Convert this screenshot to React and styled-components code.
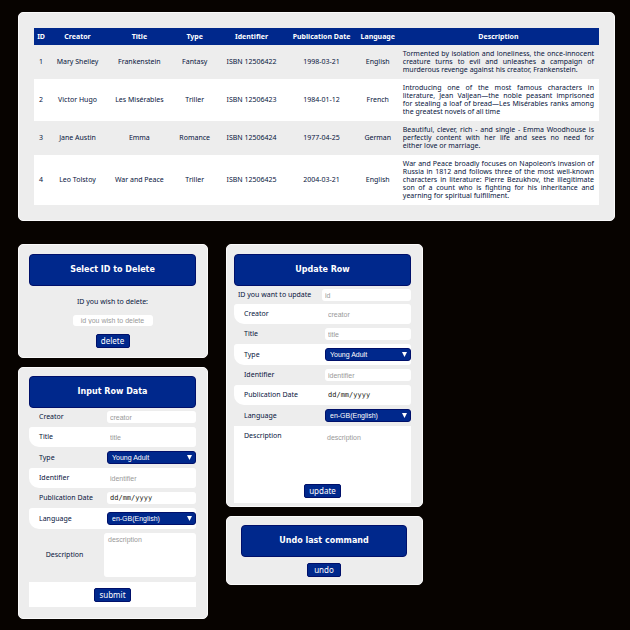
import React from "react";
import styled, { createGlobalStyle } from "styled-components";

const navy = "#00288c";
const edge = "#00106a";
const ink = "#06143c";
const textFont = '"Noto Sans", sans-serif';

const GlobalStyle = createGlobalStyle`
  * { box-sizing: border-box; }
  body { margin: 0; background: #070300; color: ${ink}; font: 7px/10px ${textFont}; }
`;

const Page = styled.main`
  padding: 12px 15px 12px 18px;
  display: flex;
  flex-direction: column;
  gap: 23px;
`;

const Panel = styled.section`
  background: #ededed;
  border: 1px solid #fafafa;
  border-radius: 5px;
  padding: ${(p) => p.$pad || "9px 11px 9px 10px"};
`;

const Table = styled.table`
  width: 100%;
  table-layout: fixed;
  border-collapse: collapse;
  line-height: 8px;
  text-align: center;
`;

const Col = styled.col`
  width: ${(p) => p.$w}%;
`;

const Th = styled.th`
  height: 17px;
  padding: 0;
  background: ${navy};
  color: #fff;
  white-space: nowrap;
`;

const Tr = styled.tr`
  &:nth-child(even) { background: #fff; }
`;

const Td = styled.td`
  padding: 5px 0;
  white-space: nowrap;
`;

const DescriptionCell = styled(Td)`
  padding: 5px;
  text-align: justify;
  white-space: normal;
`;

const Forms = styled.div`
  display: grid;
  grid-template-columns: 190fr 197fr 174fr;
  column-gap: 18px;
  align-items: start;
`;

const Column = styled.div`
  display: flex;
  flex-direction: column;
  gap: 9px;
`;

const Heading = styled.h2`
  margin: 0;
  height: 32px;
  display: flex;
  align-items: center;
  justify-content: center;
  background: ${navy};
  border: 1px solid ${edge};
  border-radius: 4px;
  color: #fff;
  font: bold 8px/10px "DejaVu Sans", sans-serif;
`;

const Form = styled.form`
  display: flex;
  flex-direction: column;
`;

const Centered = styled(Form)`
  align-items: center;
  padding-top: ${(p) => p.$top}px;
  gap: 8px;
`;

const Row = styled.div`
  display: grid;
  grid-template-columns: ${(p) => p.$cols};
  align-items: center;
  padding: 4px 0 ${(p) => (p.$flush ? "3px 4px" : "4px 10px")};
  border-radius: 3px 3px 3px 10px;
  background: ${(p) => (p.$white ? "#fff" : "transparent")};
  &:first-child { padding-top: 3px; }
`;

const Label = styled.label`
  white-space: nowrap;
`;

const Input = styled.input`
  width: ${(p) => p.$w || "100%"};
  min-width: 0;
  height: ${(p) => (p.$w ? 11 : 12)}px;
  padding: 0 3px;
  border: 0;
  border-radius: 3px;
  background: #fff;
  color: #222;
  font: 7px/10px "Liberation Sans", sans-serif;
  text-align: ${(p) => (p.$w ? "center" : "left")};
  &::placeholder { color: #999; opacity: 1; }
`;

const DateInput = styled(Input)`
  font-family: "DejaVu Sans Mono", monospace;
  &::placeholder { color: #201810; }
`;

const SelectBox = styled.div`
  position: relative;
`;

const Select = styled.select`
  appearance: none;
  display: block;
  width: 100%;
  height: 13px;
  padding: 0 4px;
  border: 1px solid ${edge};
  border-radius: 3px;
  background: ${navy};
  color: #fff;
  font: 7px/10px "Liberation Sans", sans-serif;
`;

const Arrow = styled.svg`
  position: absolute;
  right: 4px;
  top: 4px;
  width: 5px;
  height: 5px;
  pointer-events: none;
`;

const TextArea = styled.textarea`
  display: block;
  width: 100%;
  height: ${(p) => p.$h}px;
  padding: 2px 4px;
  border: 0;
  border-radius: 3px;
  resize: none;
  background: #fff;
  font: 7px/10px "Liberation Sans", sans-serif;
  &::placeholder { color: #999; opacity: 1; }
`;

const DescriptionRow = styled.div`
  display: grid;
  grid-template-columns: 75fr 92fr;
  align-items: center;
  padding: 4px 0 5px;
`;

const CenterLabel = styled(Label)`
  text-align: center;
  padding-right: 4px;
`;

const Footer = styled.div`
  display: flex;
  justify-content: center;
  padding: 6px 0 5px;
  background: #fff;
`;

const UpdateBlock = styled.div`
  display: flex;
  flex-direction: column;
  background: #fff;
`;

const UpdateDescription = styled.div`
  display: grid;
  grid-template-columns: 79fr 88fr;
  padding: 5px 0 5px 10px;
`;

const Button = styled.button`
  height: 14px;
  min-width: 34px;
  padding: 0 4px;
  border: 1px solid ${edge};
  border-radius: 2px;
  background: ${navy};
  color: #fff;
  font: 8px/10px ${textFont};
`;

const columns = [
  ["ID", 2.5], ["Creator", 10.4], ["Title", 11.5], ["Type", 8.1],
  ["Identifier", 12], ["Publication Date", 12.8], ["Language", 7.1], ["Description", 35.6],
];

const books = [
  ["1", "Mary Shelley", "Frankenstein", "Fantasy", "ISBN 12506422", "1998-03-21", "English",
    "Tormented by isolation and loneliness, the once-innocent creature turns to evil and unleashes a campaign of murderous revenge against his creator, Frankenstein."],
  ["2", "Victor Hugo", "Les Misérables", "Triller", "ISBN 12506423", "1984-01-12", "French",
    "Introducing one of the most famous characters in literature, Jean Valjean—the noble peasant imprisoned for\u00a0stealing a loaf of bread—Les Misérables ranks among the\u00a0greatest novels of all time"],
  ["3", "Jane Austin", "Emma", "Romance", "ISBN 12506424", "1977-04-25", "German",
    "Beautiful, clever, rich - and single - Emma Woodhouse is perfectly content with her life and sees no need for either\u00a0love or marriage."],
  ["4", "Leo Tolstoy", "War and Peace", "Triller", "ISBN 12506425", "2004-03-21", "English",
    "War and Peace broadly focuses on Napoleon’s invasion of Russia in 1812 and follows three of the most well-known characters in literature: Pierre Bezukhov, the illegitimate son of a count who is fighting for his inheritance and yearning for spiritual fulfillment."],
];

const fields = [
  { name: "Creator", hint: "creator" },
  { name: "Title", hint: "title" },
  { name: "Type", options: ["Young Adult", "Fantasy", "Triller", "Romance"] },
  { name: "Identifier", hint: "identifier" },
  { name: "Publication Date", hint: "dd/mm/yyyy", date: true },
  { name: "Language", options: ["en-GB(English)", "fr-FR(French)", "de-DE(German)"] },
];

function Field({ field, prefix, white, cols }) {
  const id = prefix + "-" + field.name.toLowerCase().replace(" ", "-");
  return (
    <Row $white={white} $cols={cols}>
      <Label htmlFor={id}>{field.name}</Label>
      {field.options ? (
        <SelectBox>
          <Select id={id}>
            {field.options.map((o) => <option key={o}>{o}</option>)}
          </Select>
          <Arrow viewBox="0 0 5 5" aria-hidden="true"><path d="M0 0h5L2.5 5z" fill="#fff" /></Arrow>
        </SelectBox>
      ) : field.date ? (
        <DateInput id={id} placeholder={field.hint} />
      ) : (
        <Input id={id} placeholder={field.hint} />
      )}
    </Row>
  );
}

export default function App() {
  return (
    <>
      <GlobalStyle />
      <Page>
        <Panel $pad="15px">
          <Table>
            <colgroup>{columns.map(([n, w]) => <Col key={n} $w={w} />)}</colgroup>
            <thead><tr>{columns.map(([n]) => <Th key={n} scope="col">{n}</Th>)}</tr></thead>
            <tbody>
              {books.map((b) => (
                <Tr key={b[0]}>
                  {b.slice(0, 7).map((v, i) => <Td key={i}>{v}</Td>)}
                  <DescriptionCell>{b[7]}</DescriptionCell>
                </Tr>
              ))}
            </tbody>
          </Table>
        </Panel>
        <Forms>
          <Column>
            <Panel>
              <Heading>Select ID to Delete</Heading>
              <Centered $top={11} onSubmit={(e) => e.preventDefault()}>
                <Label htmlFor="delete-id">ID you wish to delete:</Label>
                <Input id="delete-id" $w="80px" placeholder="id you wish to delete" />
                <Button>delete</Button>
              </Centered>
            </Panel>
            <Panel $pad="8px 11px 11px 10px">
              <Heading>Input Row Data</Heading>
              <Form onSubmit={(e) => e.preventDefault()}>
                {fields.map((f, i) => (
                  <Field key={f.name} field={f} prefix="input" white={i % 2 === 1} cols="68fr 89fr" />
                ))}
                <DescriptionRow>
                  <CenterLabel htmlFor="input-description">Description</CenterLabel>
                  <TextArea id="input-description" $h={44} placeholder="description" />
                </DescriptionRow>
                <Footer><Button>submit</Button></Footer>
              </Form>
            </Panel>
          </Column>
          <Column>
            <Panel $pad="9px 11px 3px 7px">
              <Heading>Update Row</Heading>
              <Form onSubmit={(e) => e.preventDefault()}>
                <Row $flush $cols="84fr 89fr">
                  <Label htmlFor="update-id">ID you want to update</Label>
                  <Input id="update-id" placeholder="id" />
                </Row>
                {fields.map((f, i) => (
                  <Field key={f.name} field={f} prefix="update" white={i % 2 === 0} cols="81fr 86fr" />
                ))}
                <UpdateBlock>
                  <UpdateDescription>
                    <Label htmlFor="update-description">Description</Label>
                    <TextArea id="update-description" $h={42} placeholder="description" />
                  </UpdateDescription>
                  <Footer><Button>update</Button></Footer>
                </UpdateBlock>
              </Form>
            </Panel>
            <Panel $pad="8px 15px 7px 14px">
              <Heading>Undo last command</Heading>
              <Centered $top={6} onSubmit={(e) => e.preventDefault()}>
                <Button>undo</Button>
              </Centered>
            </Panel>
          </Column>
        </Forms>
      </Page>
    </>
  );
}
